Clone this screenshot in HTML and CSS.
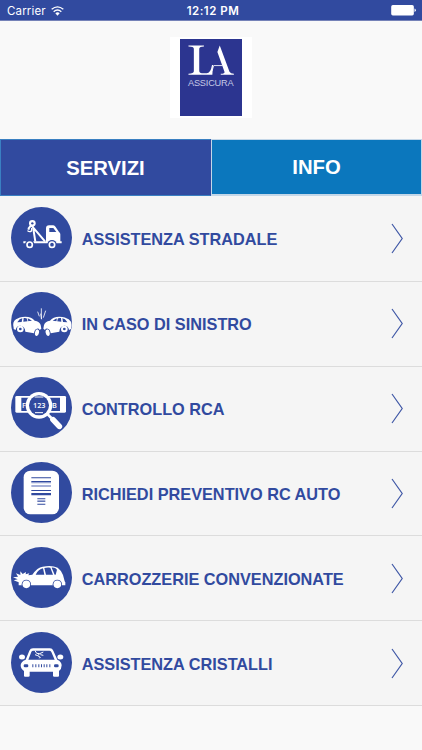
FILE: index.html
```html
<!DOCTYPE html>
<html lang="it">
<head>
    <meta charset="utf-8">
    <meta name="viewport" content="width=device-width, initial-scale=1.0">
    <title>LA Assicura</title>
    <link rel="stylesheet" href="styles.css">
</head>
<body>
    <div class="status-bar">
        <div class="carrier">
            <span>Carrier</span>
            <svg class="wifi" viewBox="0 0 39 30">
                <path d="M2 10Q19.500 -5 37 10M8 17Q19.500 7 31 17" fill="none" stroke="#fff" stroke-width="4"/>
                <path d="M13 22Q19.500 16 26 22L19.500 29Z" fill="#fff"/>
            </svg>
        </div>
        <span class="time">12:12 PM</span>
        <svg class="battery" viewBox="0 0 75 32">
            <rect x="0" y="0" width="69" height="32" rx="5" fill="#fff"/>
            <path d="M71 11Q75 12 75 16T71 21Z" fill="#fff"/>
        </svg>
    </div>

    <header class="header">
        <div class="logo-frame">
            <div class="logo">
                <svg class="logo-mark" viewBox="60 27 184 110">
                    <g fill="#fff">
                        <path d="M85 46H131V49Q118 49 117 56V121Q117 129 125 129H139Q151 128 155 104H158L156 133H85V130Q101 130 101 123V56Q101 49 85 49Z"/>
                        <path d="M178 46L207 124Q210 130 220 130V133H181V130Q194 130 192 124L171 66Z"/>
                    </g>
                    <path d="M155 122L160 106H186" fill="none" stroke="#fff" stroke-width="2.500"/>
                </svg>
                <span class="logo-name">ASSICURA</span>
            </div>
        </div>
    </header>

    <nav class="tabs">
        <a class="tab tab-active">SERVIZI</a>
        <a class="tab tab-info">INFO</a>
    </nav>

    <main class="services">
        <a class="service">
            <svg class="service-icon" viewBox="32 20 183 183">
                <circle class="disc" cx="123.500" cy="111.500" r="91.500"/>
                <!-- tow truck -->
                <path class="line" stroke-width="6" d="M69 126H79M97 126H145M165 126H184"/>
                <path class="white" d="M137 124V84Q137 75 146 75H159Q163 75 166 80L176 95Q180 98 180 102V126H137Z"/>
                <path class="blue" d="M147 83H159L168 95H147Z"/>
                <path class="line" stroke-width="6" d="M93 75L134 123M98 79L105 124M92 75L85 84V88"/>
                <path class="line" stroke-width="4" d="M94 83V88Q94 94 88 94T83 90"/>
                <circle class="white" cx="96" cy="69" r="10"/>
                <circle class="blue" cx="96" cy="69" r="3.500"/>
                <circle class="blue" cx="88" cy="133" r="14"/>
                <circle class="line" cx="88" cy="133" r="8" stroke-width="5"/>
                <circle class="blue" cx="155" cy="133" r="14"/>
                <circle class="line" cx="155" cy="133" r="8" stroke-width="5"/>
            </svg>
            <span class="service-name">ASSISTENZA STRADALE</span>
            <svg class="chevron" viewBox="0 0 12 31"><path d="M1 1L11.200 15.500L1 30"/></svg>
        </a>
        <a class="service">
            <svg class="service-icon" viewBox="32 20 183 183">
                <circle class="disc" cx="123.500" cy="111.500" r="91.500"/>
                <!-- two cars, the right one is the left one mirrored -->
                <g id="crash-car">
                    <path class="white" d="M40 128Q35 110 47 102Q56 95 75 94Q94 94 103 106Q118 108 121 119L123 130L118 134Q116 129 110 130Q102 132 101 144L75 139Q74 122 60 121Q48 121 46 134L40 131Z"/>
                    <path class="blue" d="M52 109Q57 100 66 99L64 110L51 111ZM70 98Q86 97 95 106L69 109Z"/>
                    <path class="line" stroke-width="2.500" d="M80 96L83 110"/>
                    <circle class="white" cx="60" cy="131" r="10"/>
                    <circle class="blue" cx="60" cy="131" r="4"/>
                    <ellipse class="white" cx="110" cy="142" rx="6" ry="10" transform="rotate(12 110 142)"/>
                    <path class="line" stroke="#314a9f" stroke-width="2" d="M109 137L107 146"/>
                </g>
                <use href="#crash-car" transform="matrix(-1 0 0 1 252 0)"/>
                <path class="line" stroke-width="2.500" d="M112 79L117 93M123 69V101M136 76L129 97M121 85L124 102"/>
            </svg>
            <span class="service-name">IN CASO DI SINISTRO</span>
            <svg class="chevron" viewBox="0 0 12 31"><path d="M1 1L11.200 15.500L1 30"/></svg>
        </a>
        <a class="service">
            <svg class="service-icon" viewBox="32 20 183 183">
                <circle class="disc" cx="123.500" cy="111.500" r="91.500"/>
                <!-- number plate under a magnifier -->
                <rect class="white" x="45" y="77" width="152" height="50" rx="4"/>
                <path class="blue" d="M63 82H179V122H63Z"/>
                <text class="plate" x="65" y="112">F</text>
                <text class="plate" x="155" y="112">B</text>
                <path class="blue" d="M141 137L151 128L168 137L187 162Q190 176 174 178L149 151Z"/>
                <path class="line" stroke-width="8" d="M139 129L153 143"/>
                <path class="line" stroke-width="17" stroke-linecap="round" d="M158 148L177 168"/>
                <circle class="white" cx="116" cy="105" r="40"/>
                <circle class="blue" cx="116" cy="105" r="30"/>
                <path class="line" stroke-width="3" d="M103 80H129M104 127H128"/>
                <text class="plate" x="98" y="112">123</text>
            </svg>
            <span class="service-name">CONTROLLO RCA</span>
            <svg class="chevron" viewBox="0 0 12 31"><path d="M1 1L11.200 15.500L1 30"/></svg>
        </a>
        <a class="service">
            <svg class="service-icon" viewBox="32 20 183 183">
                <circle class="disc" cx="123.500" cy="111.500" r="91.500"/>
                <!-- quote sheet -->
                <rect class="white" x="70" y="46" width="106" height="131" rx="20"/>
                <path class="blue" d="M93 66H152V69H93ZM93 77H152V81H93ZM93 104H152V107H93ZM93 113H152V120H93ZM111 129H135V132H111ZM111 137H135V139H111ZM111 145H135V148H111Z"/>
                <path fill="#8997cc" d="M93 81H152V84H93ZM93 90H152V94H93ZM111 134H135V136H111Z"/>
            </svg>
            <span class="service-name">RICHIEDI PREVENTIVO RC AUTO</span>
            <svg class="chevron" viewBox="0 0 12 31"><path d="M1 1L11.200 15.500L1 30"/></svg>
        </a>
        <a class="service">
            <svg class="service-icon" viewBox="32 20 183 183">
                <circle class="disc" cx="123.500" cy="111.500" r="91.500"/>
                <!-- car with damaged front -->
                <path class="white" d="M96 103Q111 81 127 79Q155 74 172 82Q184 91 188 104L193 123L195 126V135H55V126L40 120L52 117L38 111L53 109L47 99L60 104L60 93L67 101L77 95L76 102L87 99L84 105Z"/>
                <path class="blue" d="M106 103Q115 86 128 84L132 103ZM132 83Q140 81 150 82L158 103H137ZM154 82Q165 81 170 88L166 103H163Z"/>
                <circle class="blue" cx="78" cy="132" r="14"/>
                <circle class="white" cx="78" cy="132" r="11.500"/>
                <circle class="blue" cx="171" cy="132" r="14"/>
                <circle class="white" cx="171" cy="132" r="11.500"/>
            </svg>
            <span class="service-name">CARROZZERIE CONVENZIONATE</span>
            <svg class="chevron" viewBox="0 0 12 31"><path d="M1 1L11.200 15.500L1 30"/></svg>
        </a>
        <a class="service">
            <svg class="service-icon" viewBox="32 20 183 183">
                <circle class="disc" cx="123.500" cy="111.500" r="91.500"/>
                <!-- car front with cracked windscreen -->
                <path class="white" d="M76 103L87 76Q90 69 98 69H149Q156 69 159 76L171 103Q184 109 184 120Q184 131 176 137V151Q176 154 173 154H162Q158 154 158 151V139H88V151Q88 154 84 154H74Q71 154 71 151V137Q61 131 61 120Q61 109 76 103Z"/>
                <path class="blue" d="M84 103L93 80Q94 76 99 76H147Q151 76 153 80L163 103Z"/>
                <ellipse class="white" cx="65" cy="95" rx="9" ry="7.500"/>
                <ellipse class="white" cx="180" cy="95" rx="9" ry="7.500"/>
                <path class="line" stroke-width="3" d="M104 76L109 84L118 85L112 91L120 96M118 85L129 80M112 91L104 88M120 88L129 90M120 95L117 99"/>
                <rect class="blue" x="70" y="117" width="14" height="9" rx="4"/>
                <rect class="blue" x="161" y="117" width="14" height="9" rx="4"/>
                <path class="blue" d="M96 117h3v9h-3zM105 117h3v9h-3zM114 117h3v9h-3zM122 117h3v9h-3zM130 117h3v9h-3zM138 117h3v9h-3zM147 117h3v9h-3z"/>
            </svg>
            <span class="service-name">ASSISTENZA CRISTALLI</span>
            <svg class="chevron" viewBox="0 0 12 31"><path d="M1 1L11.200 15.500L1 30"/></svg>
        </a>
    </main>
</body>
</html>
```

FILE: styles.css
```css
* {
    box-sizing: border-box;
}

body {
    margin: 0;
    height: 750px;
    overflow: hidden;
    background-color: #f9f9f9;
    font-family: "Liberation Sans", Arial, sans-serif;
}

.status-bar {
    display: grid;
    grid-template-columns: 1fr auto 1fr;
    align-items: center;
    height: 21px;
    padding: 1px 6px 0 7px;
    background-color: #314a9f;
    border-bottom: 1px solid #7582b8;
    color: #fff;
    font-family: Inter, sans-serif;
    font-size: 11.5px;
}

.carrier {
    display: flex;
    align-items: center;
    gap: 5px;
    letter-spacing: 0.15px;
}

.wifi {
    width: 13px;
    height: 10px;
}

.time {
    padding-left: 3px;
    font-weight: 600;
    letter-spacing: 0.5px;
}

.battery {
    justify-self: end;
    width: 25px;
    height: 10.5px;
}

.header {
    display: flex;
    justify-content: center;
    height: 118px;
    padding-top: 16px;
}

.logo-frame {
    width: 82px;
    height: 81px;
    padding: 2px 0 0 10px;
    background-color: #fff;
}

.logo {
    display: flex;
    flex-direction: column;
    width: 62px;
    height: 77px;
    background-color: #2c3590;
}

.logo-mark {
    width: 62px;
    height: 37px;
}

.logo-name {
    margin-left: 8px;
    color: #c5c9e6;
    font-size: 9.2px;
    line-height: 14px;
    letter-spacing: -0.2px;
}

.tabs {
    display: flex;
    height: 58px;
    background-color: #f5f5f5;
}

.tab {
    display: flex;
    align-items: center;
    justify-content: center;
    width: 211px;
    height: 57px;
    padding-top: 1px;
    color: #fff;
    font-size: 20.3px;
    font-weight: bold;
}

.tab-active {
    background-color: #314a9f;
    border: 1px solid #3a80c2;
    border-right-color: #314a9f;
}

.tab-info {
    background-color: #0b77bd;
    border: 1px solid #c4d7e8;
    border-bottom-width: 2px;
}

.service {
    display: flex;
    align-items: center;
    height: 84.85px;
    padding: 0 19.5px 0 10.7px;
    background-color: #f5f5f5;
    border-bottom: 1px solid #dcdcdc;
}

.service-icon {
    width: 61px;
    height: 61px;
    margin-top: -2px;
}

.service-name {
    flex: 1;
    margin: 2px 0 0 10px;
    color: #314a9f;
    font-size: 16.3px;
    font-weight: bold;
    white-space: nowrap;
}

.chevron {
    width: 12px;
    height: 31px;
    fill: none;
    stroke: #3f57a6;
    stroke-width: 1.2;
}

.disc,
.blue {
    fill: #314a9f;
}

.white {
    fill: #fff;
}

.line {
    fill: none;
    stroke: #fff;
}

.plate {
    fill: #fff;
    font-family: "Open Sans", sans-serif;
    font-size: 22px;
    font-weight: 600;
}
```
